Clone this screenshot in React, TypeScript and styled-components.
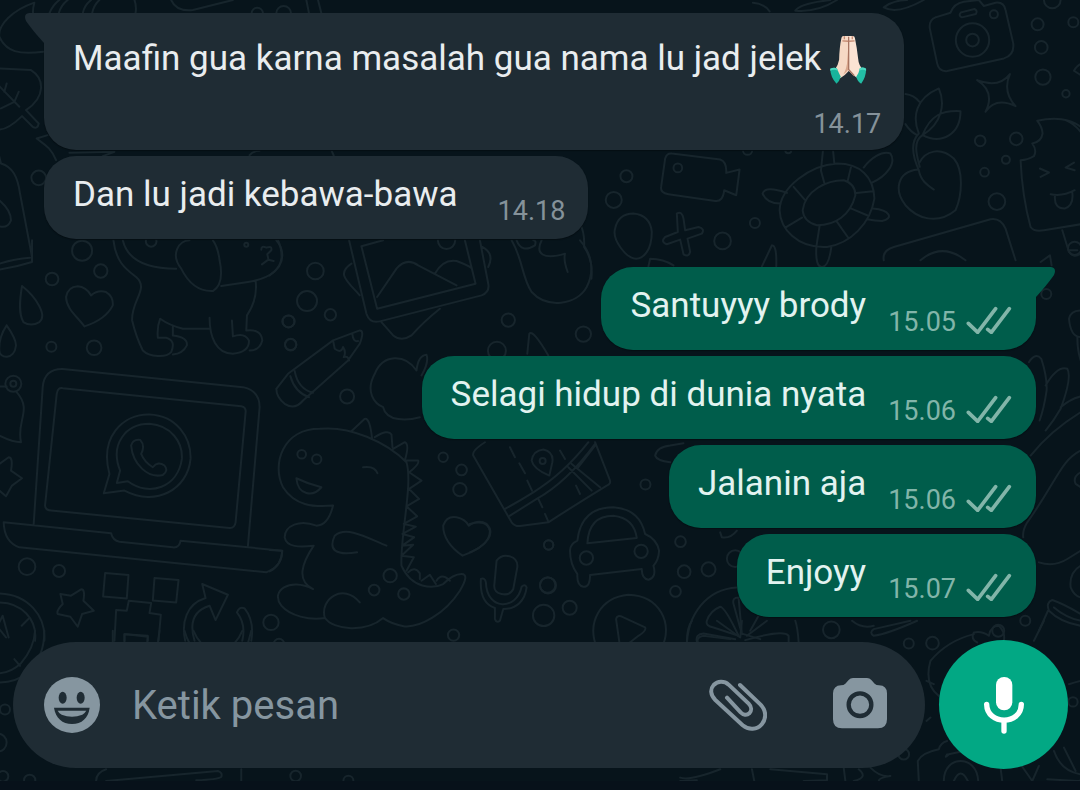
import React from "react";
import styled, { createGlobalStyle } from "styled-components";

const GlobalStyle = createGlobalStyle`
  *, *::before, *::after { box-sizing: border-box; }
  body { margin: 0; background: #07141b; font-family: Roboto, "Noto Sans", sans-serif; }
`;

const Screen = styled.div`
  position: relative;
  min-height: 100vh;
  display: flex;
  flex-direction: column;
  overflow: hidden;
  background: #07141b;
`;

const Pattern = styled.svg`
  position: absolute;
  inset: 0;
  width: 100%;
  height: 100%;
  fill: none;
  stroke: #17252c;
  stroke-width: 6;
  stroke-linecap: round;
  stroke-linejoin: round;
`;

const Messages = styled.main`
  position: relative;
  flex: 1;
  display: flex;
  flex-direction: column;
  gap: 28px;
  padding: 13px 44px 0;
`;

const Group = styled.section<{ $out?: boolean }>`
  display: flex;
  flex-direction: column;
  align-items: ${(p) => (p.$out ? "flex-end" : "flex-start")};
  gap: 6px;
`;

const Bubble = styled.article<{ $out?: boolean; $tail?: boolean; $tall?: boolean }>`
  position: relative;
  display: flex;
  flex-direction: ${(p) => (p.$tall ? "column" : "row")};
  align-items: flex-end;
  gap: ${(p) => (p.$tall ? "10px" : p.$out ? "22px" : "40px")};
  padding: 17px ${(p) => (p.$out ? "24px" : "23px")} ${(p) => (p.$tall ? "10px" : "12px")} 29px;
  border-radius: 32px;
  ${(p) => p.$tail && (p.$out ? "border-top-right-radius: 0;" : "border-top-left-radius: 0;")}
  background: ${(p) => (p.$out ? "#005d4b" : "#1f2c34")};
  color: ${(p) => (p.$out ? "#e2f3f0" : "#e9edef")};
  box-shadow: 0 1px 1px #050e13;
`;

const Tail = styled.svg<{ $out?: boolean }>`
  position: absolute;
  top: 0;
  ${(p) => (p.$out ? "left: 100%;" : "right: 100%;")}
  width: 20px;
  height: 30px;
  fill: ${(p) => (p.$out ? "#005d4b" : "#1f2c34")};
  transform: ${(p) => (p.$out ? "scaleX(-1)" : "none")};
`;

const Text = styled.p<{ $tall?: boolean }>`
  display: flex;
  align-items: center;
  gap: 8px;
  margin: 0 ${(p) => (p.$tall ? "14px" : "0")} 10px 0;
  font-size: 35px;
  line-height: ${(p) => (p.$tall ? "58px" : "44px")};
`;

const Meta = styled.footer<{ $out?: boolean }>`
  display: flex;
  align-items: center;
  gap: 10px;
  font-size: 27px;
  line-height: 32px;
  color: ${(p) => (p.$out ? "#82b5a9" : "#85929a")};
`;

const TickIcon = styled.svg`
  width: 46px;
  height: 32px;
  padding-bottom: 4px;
  fill: none;
  stroke: currentColor;
  stroke-width: 11;
  stroke-linecap: round;
  stroke-linejoin: miter;
`;

const HandsIcon = styled.svg`
  width: 38px;
  height: 50px;
`;

const Composer = styled.form`
  position: relative;
  display: flex;
  align-items: center;
  gap: 14px;
  padding: 23px 12px 12px 13px;
`;

const Field = styled.div`
  flex: 1;
  min-width: 0;
  height: 126px;
  display: flex;
  align-items: center;
  padding: 0 36px 0 30px;
  border-radius: 63px;
  background: #1f2c34;
`;

const MessageInput = styled.input`
  flex: 1;
  min-width: 0;
  margin: 0 20px 0 31px;
  padding: 2px 0 0;
  border: 0;
  outline: 0;
  background: transparent;
  color: #e9edef;
  font: 40px/48px Roboto, "Noto Sans", sans-serif;
  &::placeholder { color: #8696a0; opacity: 1; }
`;

const IconButton = styled.button`
  flex: none;
  display: flex;
  padding: 0;
  border: 0;
  background: none;
  color: #8696a0;
  & + & { margin-left: 64px; }
`;

const Icon = styled.svg`
  width: 58px;
  height: 58px;
`;

const MicButton = styled.button`
  flex: none;
  display: flex;
  align-items: center;
  justify-content: center;
  width: 129px;
  height: 129px;
  padding: 0;
  border: 0;
  border-radius: 50%;
  background: #02a884;
`;

const BottomEdge = styled.div`
  position: relative;
  height: 10px;
  background: #07111a;
`;

type Dot = [number, number, number];

function Doodle({ x, y, d, dots = [] }: { x: number; y: number; d: string; dots?: Dot[] }) {
  return (
    <g transform={`translate(${x} ${y}) scale(0.3333)`}>
      <path d={d} />
      {dots.map(([cx, cy, r]) => (
        <circle key={`${cx}-${cy}-${r}`} cx={cx} cy={cy} r={r} />
      ))}
    </g>
  );
}

function Wallpaper() {
  return (
    <Pattern viewBox="0 0 1080 790" preserveAspectRatio="xMidYMin slice" aria-hidden="true">
      {/* leaves and bag, upper left */}
      <Doodle
        x={0}
        y={0}
        d="M105 8C40 30-5 75 0 110C20 155 60 165 132 155M105 8Q96 40 106 60M150 40Q160 15 180 0M178 40Q185 15 205 0M250 40Q255 15 275 0M278 40Q283 15 300 0M405 0Q412 20 408 40M515 0Q530 35 580 30L700 0M920 0L928 40M955 0L965 40M0 205L95 210C135 235 140 290 80 330L118 370Q115 388 100 380L68 348C40 375 20 388 0 388M0 258L60 320M22 250L15 275M58 275L45 305L5 325M145 405L112 415C130 430 155 440 170 480M0 470L5 490C40 500 55 530 62 580L98 770M0 600Q35 630 35 660Q25 685 0 678M210 458L345 455L310 468M750 465Q760 452 780 452M995 450L1002 466"
        dots={[[773, 40, 17], [852, 40, 22], [118, 533, 22]]}
      />
      {/* camera, sprout, star and ice cream, upper right */}
      <Doodle
        x={720}
        y={0}
        d="M98 8Q130 10 148 34M225 32Q240 10 330 0M225 32Q290 38 350 0M490 22Q520 0 560 0M490 22Q530 45 610 0M645 52L690 38Q700 10 730 5L775 0L790 18L825 8Q850 5 855 30L878 130Q882 165 850 175L680 213Q655 215 650 190L628 85Q625 60 645 52M722 37L762 27Q772 32 766 42L724 52Q712 46 722 37M770 240Q835 265 868 222Q845 275 885 318Q825 290 795 335Q825 275 770 240M595 400C575 350 585 295 655 265C675 310 665 370 606 405M606 405C630 345 665 330 720 333C720 400 665 435 606 405C575 425 590 470 598 500M595 400C570 425 575 465 595 510C600 540 620 555 640 568M595 490C615 450 660 440 700 475C730 510 725 585 705 630C650 675 590 655 555 615C520 570 530 515 592 508M555 282Q580 285 597 305M555 372Q570 395 590 405M950 362C1000 350 1050 355 1080 380M950 362Q965 380 966 400Q962 425 935 430Q950 450 940 468Q920 480 900 480Q905 590 930 680Q940 695 970 690L1080 672M1035 360Q1060 370 1080 395M958 505L985 517L960 530M1060 487L1035 502L1062 510M990 582Q1025 590 1062 570M1003 587Q1000 625 1032 625Q1060 615 1055 577M1025 690L1045 755Q1060 775 1080 760M1060 212Q1070 195 1080 192M1060 212L1080 225M490 780Q485 750 520 740L810 657Q840 652 855 685L885 780M600 780Q665 725 735 780"
        dots={[[756, 120, 50], [756, 120, 19], [820, 43, 12], [995, 0, 25], [951, 73, 18], [1058, 67, 15], [962, 142, 19], [967, 231, 23], [1036, 281, 11], [779, 422, 16], [887, 416, 19], [856, 479, 12], [792, 516, 13], [829, 604, 25]]}
      />
      {/* puppy, laptop, star and arrow, left */}
      <Doodle
        x={0}
        y={240}
        d="M98 0L98 65Q50 80 0 88M0 70Q45 55 92 52M68 137C110 170 145 225 120 245Q95 260 72 245C58 220 60 185 68 137M22 255Q50 295 50 315C45 360 0 355 0 330Q-2 290 22 255M255 258C235 230 200 205 200 170Q205 140 235 138Q260 140 275 165Q295 148 320 155Q342 168 340 195C325 225 295 245 255 258M342 0C350 70 385 90 410 110C450 145 395 180 398 240Q410 290 430 330C450 350 500 352 515 335Q530 300 500 292L475 292Q472 260 482 235Q510 255 550 265L632 265M370 0Q390 85 530 85M545 85C510 40 540 0 570 0M545 85Q580 155 640 152Q675 130 660 60Q655 20 640 0M665 137L745 125Q840 110 846 50Q845 20 835 0M768 122Q775 175 742 225L740 270Q785 265 788 300Q780 330 750 330M520 255L520 285Q565 290 562 315Q550 340 520 342M630 232C630 290 650 340 700 340Q750 335 748 300Q735 275 700 288L697 240M785 28Q785 15 800 22Q818 15 815 30L803 42L806 55M787 72L806 58L822 62M103 850L130 440Q135 385 190 386L730 440Q780 450 780 500L745 915M172 460Q175 440 190 443L725 497Q740 500 738 515L708 845Q705 863 690 862L155 810Q137 808 137 795ZM13 845L335 878Q340 900 360 903L520 920Q540 922 543 900L847 930Q850 975 800 995L60 920Q15 905 13 845M313 758L330 700C300 590 370 520 450 522C530 525 575 590 573 655C565 745 470 800 375 750ZM352 727L362 690C330 610 380 550 450 550C515 555 550 605 547 655C535 740 450 770 385 722ZM395 615Q400 595 422 598Q438 615 425 640Q435 665 460 680Q475 660 495 675Q508 690 490 703C445 715 400 670 395 615M0 438L22 438M52 455C100 510 50 540 65 605Q40 605 0 585M0 670L28 650Q42 650 35 690L68 713L38 735L20 767L0 750M183 1060L215 1065L245 1046Q258 1045 252 1080L283 1110L248 1120L235 1158L213 1128L175 1120Q170 1110 190 1090ZM317 997L387 1003L382 1073L311 1067ZM465 1012L537 1018L530 1085L460 1079ZM345 1200L350 1108L382 1110L388 1080L455 1087L450 1117L484 1122L477 1200M375 1200V1180L445 1188V1200M608 1030L685 1062L648 1138L630 1095C580 1110 570 1150 585 1200M608 1030L618 1072C560 1090 545 1145 557 1200M712 1115Q720 1095 735 1103Q765 1140 755 1200M712 1115Q740 1150 728 1200M0 1058C85 1060 140 1125 135 1200M0 1085C65 1085 115 1135 107 1200M67 1155L87 1135M0 1145L10 1125L28 1190M0 1165L20 1190"
        dots={[[455, 3, 16], [740, 13, 6], [248, 31, 30], [304, 92, 20], [158, 116, 19], [156, 319, 15], [284, 322, 22], [866, 243, 18], [873, 313, 17], [42, 430, 24], [42, 430, 9], [83, 978, 25], [179, 991, 18], [814, 1145, 23]]}
      />
      {/* picture frame, pencil, apple, dinosaur and map, centre */}
      <Doodle
        x={270}
        y={240}
        d="M0 105Q38 80 38 45Q38 20 20 0M238 0L290 220Q300 250 330 243L635 165Q660 155 655 130L630 0M275 18L322 205L617 130L585 0M275 18L340 0M322 170L380 85Q410 50 445 75L560 135M495 100Q520 55 560 62Q595 75 603 82M245 70C200 100 230 120 270 165M637 20Q675 40 655 80M335 245L370 285Q395 305 425 285Q460 245 510 205M725 0C760 60 755 110 785 155C830 205 920 195 950 140C975 90 965 40 930 0M740 0Q755 40 795 15Q800 0 790 0M815 0C795 40 820 60 885 40Q880 60 893 95M20 445L55 400L190 300L270 270Q285 270 270 310L235 360L100 480Q75 510 45 490Q20 470 20 445M75 392Q85 445 130 457M62 407Q75 455 118 470M190 300L195 325Q215 340 220 320Q230 335 222 350Q235 345 238 360M248 282Q250 305 265 302M440 390C405 340 340 340 315 400C285 455 315 490 340 500C350 545 415 540 450 530M440 390Q445 345 470 343Q478 365 455 405M772 340L778 280Q788 265 835 345M190 795C130 800 75 795 40 740C5 670 40 565 150 565C240 555 350 605 410 665C430 730 390 890 395 975C425 1045 490 1045 520 1030Q550 1000 575 1000Q600 1000 570 1050C525 1120 450 1160 405 1157Q365 1150 340 1132C290 1175 190 1170 165 1130C150 1075 220 1025 270 1085M190 795Q175 855 140 855C90 835 45 855 45 890C50 920 90 920 132 915C95 970 80 1020 130 1045C60 1010 0 1050 35 1095C60 1125 120 1140 165 1132M350 915C290 890 230 855 195 885Q165 950 262 935M280 680Q315 675 323 698M80 713Q115 730 155 740C130 770 85 765 80 713M245 572L285 535Q300 530 307 595M315 590Q355 565 365 582L368 620M370 625L405 605Q420 610 405 660M410 660L445 660Q450 670 418 695M418 695L455 720L418 745L448 775L410 797L442 827L402 850L438 858L398 880L433 890L397 915L430 912L395 945L432 950L410 990M415 995Q435 975 450 998V1015M455 1020L480 1002L498 1030M500 1020Q515 995 540 1020M578 945C535 915 520 885 520 855Q530 825 560 830Q585 835 597 855Q625 835 650 850Q670 870 655 895Q635 925 578 945M0 928L38 930Q35 975 0 992M680 960Q695 940 720 947Q745 955 742 980L730 1045Q720 1065 695 1060Q672 1055 673 1035ZM633 1015Q645 1010 648 1025C650 1110 740 1110 755 1038Q765 1028 770 1040C765 1080 740 1105 700 1105L690 1140Q680 1148 675 1135V1102C640 1090 630 1060 633 1015"
        dots={[[530, 0, 26], [137, 92, 25], [112, 182, 30], [57, 243, 18], [182, 223, 17], [63, 312, 17], [232, 468, 21], [715, 239, 20], [940, 281, 23], [681, 331, 27], [96, 641, 13], [141, 656, 14], [361, 1005, 20], [313, 1048, 16], [402, 1060, 17], [520, 650, 14], [575, 688, 16], [570, 747, 20], [836, 913, 14], [833, 1033, 23], [821, 1124, 32], [899, 1101, 21], [551, 1183, 17]]}
      />
      {/* video camera, egg, cross and turtle */}
      <Doodle
        x={580}
        y={150}
        d="M275 10L420 28Q440 35 438 68L478 58L468 135L432 120Q428 155 405 152L265 132Q240 128 243 110L255 25Q260 8 275 10M105 235Q115 190 160 190Q210 195 215 245C215 300 190 325 168 325C140 325 95 270 105 235M290 190Q305 180 310 205L315 240L355 230Q375 235 365 250L322 265L330 305Q325 322 310 312L300 268L260 282Q240 275 255 260L293 245ZM598 180C600 110 690 45 770 40C840 40 880 80 882 145C870 220 810 280 740 290C650 295 600 235 598 180M667 180C675 120 740 90 790 90Q825 100 825 135C810 195 765 225 710 225Q670 215 667 180M640 110L673 148M722 62L733 102M812 50L802 92M828 128L878 123M813 175L860 195M770 215L802 260M718 225L708 290M665 202L615 232M620 128Q555 105 547 130Q560 160 600 160M722 60L728 0M762 40L758 0M850 52C870 25 905 0 930 10C950 40 915 80 875 97M878 175C930 180 940 205 905 212Q885 212 860 207M708 292Q705 350 725 350Q745 350 753 290M545 348L575 285Q590 285 588 348M205 348L210 325Q250 325 280 345M0 220Q15 250 12 290Q40 330 34 385"
        dots={[[293, 53, 13], [139, 78, 18], [101, 149, 24], [524, 218, 15], [427, 272, 25], [502, 0, 14], [624, 0, 9]]}
      />
      {/* plants along the right edge */}
      <Doodle
        x={860}
        y={250}
        d="M540 35L568 15L573 45M650 0Q635 0 625 0M660 180Q630 180 625 205Q630 260 660 260M650 260Q650 300 660 330M505 335Q525 305 542 325Q560 380 558 420Q550 475 537 510M555 405Q590 345 620 355Q635 380 600 475Q580 510 555 540M600 470Q630 445 660 438M510 615Q570 540 660 485M660 600C600 630 590 690 500 815Q485 840 488 860M660 665Q635 680 645 700L660 710M535 935Q580 950 620 925L660 900M660 945Q625 965 630 1010Q640 1035 660 1040M660 1090Q610 1060 575 1048Q555 1055 565 1080Q600 1115 660 1125M660 1110Q615 1100 580 1070M562 1080L535 1140"
        dots={[[557, 131, 15], [642, -6, 20], [494, 1110, 15], [413, 1140, 18]]}
      />
      {/* folded map, car, play button and citrus slice */}
      <Doodle
        x={470}
        y={430}
        d="M45 35Q5 60 10 75L125 275Q135 288 150 286L235 275Q320 220 410 165Q425 160 418 145L375 35M105 235Q150 210 190 185Q280 130 355 35M120 255L200 205Q290 155 375 40M295 110L365 180M305 100L390 170M325 110L375 45M120 50L135 80M148 98L165 128M172 150L186 180M270 60L285 85M205 205L217 230M225 250L235 273M318 165L330 190M185 90Q190 60 220 57Q252 65 247 95L238 135Q190 115 185 90M600 95Q560 90 555 75Q560 50 600 45L640 38M300 360Q300 340 322 330C330 260 370 230 430 230C490 235 515 265 525 310Q560 325 567 360Q565 390 550 405Q560 440 535 447Q515 445 515 415L360 433Q360 470 340 468Q320 465 322 430Q300 400 300 360M352 338C355 275 390 255 430 255C475 260 495 285 500 322ZM0 280Q50 265 60 300Q60 340 0 365M380 650C350 575 390 500 475 492C570 495 610 580 575 650M450 650L438 565Q440 550 460 560L525 590Q530 600 505 615L460 650M650 650C650 550 710 475 800 470M710 570Q720 540 750 528Q765 530 805 615L730 590Q705 585 710 570M790 520Q785 500 805 500L815 610L790 520M840 600L865 555M690 650Q670 620 700 615L780 625M820 610L870 625M750 305L755 320Q780 325 800 300"
        dots={[[218, 91, 9], [526, 162, 15], [236, 343, 14], [234, 464, 24], [349, 382, 20], [513, 362, 20], [631, 333, 16], [642, 423, 19], [715, 416, 21], [795, 384, 25], [616, 482, 16]]}
      />
      {/* lower edge shapes */}
      <Doodle
        x={0}
        y={630}
        d="M135 0Q135 80 85 125Q50 155 0 155M107 0Q105 50 65 97Q35 125 0 127M45 85L62 105M340 37V0M375 37V10L445 15L443 37M480 0L475 37M555 0Q560 20 570 37M582 0Q590 20 605 37M728 0Q720 20 705 37M755 0Q750 20 745 37M290 450Q290 425 320 415M320 450L655 420Q670 425 665 438Q655 445 590 448M725 415V450"
        dots={[[17, 236, 15], [-5, 335, 27], [11, 436, 16], [91, 448, 17], [838, 40, 16], [888, 435, 16], [1046, 449, 15]]}
      />
      <Doodle
        x={680}
        y={620}
        d="M20 65Q20 20 35 0M355 65Q352 20 345 0M50 62Q45 40 70 38L165 55M110 0L180 50L185 0M200 45L260 0M195 58Q310 25 325 45V65M515 0Q545 25 580 15M690 0L580 25Q565 35 580 45Q620 40 710 0M890 65Q870 55 880 35Q905 30 925 45Q930 15 955 15Q975 35 970 60M880 40Q800 60 750 120Q730 190 775 225M738 180L760 190M738 300L750 290M1060 60L1090 0M1165 190Q1180 185 1200 180M715 480L712 420Q725 395 775 385Q780 365 800 360M800 400Q790 415 805 400L850 390M790 480C790 400 890 400 893 480M820 480Q840 435 862 480M960 440L965 480M1020 430L1055 480L1075 435M1120 390Q1140 450 1200 460Q1210 480 1190 480L1100 475M1150 380L1185 450M490 440L495 480M520 480Q565 470 535 445M570 440Q600 470 630 465Q595 470 595 480M215 445L222 480M0 470Q30 480 120 445M0 480L50 478M270 445L440 460V478L370 480"
        dots={[[453, 27, 25], [685, 68, 15], [756, 67, 19], [1177, 243, 14], [670, 400, 16]]}
      />
    </Pattern>
  );
}

function PrayingHands() {
  return (
    <HandsIcon viewBox="32 22 112 152" role="img" aria-label="🙏🏻">
      <path d="M68 34Q69 27 76 28L91 28V134Q79 149 63 157Q51 147 47 132Q58 118 61 100Q62 62 68 34Z" fill="#f6d9c5" />
      <path d="M109 34Q108 27 101 28L90 28V134Q101 148 119 157Q130 147 134 132Q120 116 119 98Q115 62 109 34Z" fill="#fbe3d3" />
      <path d="M90 44V129Q83 138 74 145Q85 125 86 100Z" fill="#d9a78d" />
      <path d="M90 30V130L107 149" fill="none" stroke="#a87562" strokeWidth="4" />
      <path d="M71 43L89 44M91 44L108 43M77 29V38M101 29V38" fill="none" stroke="#c48a72" strokeWidth="4" />
      <path d="M34 128Q44 122 54 126Q60 140 66 152Q62 166 53 173Q35 155 34 128Z" fill="#18b49c" />
      <path d="M143 128Q133 121 124 126Q121 142 113 152Q117 167 128 173Q143 154 143 128Z" fill="#23bda5" />
      <path d="M34 128Q44 122 54 126L57 134Q46 128 34 134ZM143 128Q133 121 124 126L122 134Q133 128 143 134Z" fill="#4fd8c0" />
    </HandsIcon>
  );
}

function Ticks() {
  return (
    <TickIcon viewBox="318 167 138 84" role="img" aria-label="Terkirim">
      <path d="M325 219L353 246L407 175M383 237L394 246L448 175" />
    </TickIcon>
  );
}

interface MessageProps {
  time: string;
  out?: boolean;
  tail?: boolean;
  tall?: boolean;
  children: React.ReactNode;
}

function Message({ time, out, tail, tall, children }: MessageProps) {
  return (
    <Bubble $out={out} $tail={tail} $tall={tall}>
      {tail && (
        <Tail $out={out} viewBox="0 0 20 30" aria-hidden="true">
          <path d="M20 0H5Q-1 1 2 8Q9 18 20 30Z" />
        </Tail>
      )}
      <Text $tall={tall}>{children}</Text>
      <Meta $out={out}>
        <time>{time}</time>
        {out && <Ticks />}
      </Meta>
    </Bubble>
  );
}

export default function App() {
  return (
    <Screen>
      <GlobalStyle />
      <Wallpaper />
      <Messages>
        <Group>
          <Message time="14.17" tail tall>
            Maafin gua karna masalah gua nama lu jad jelek
            <PrayingHands />
          </Message>
          <Message time="14.18">Dan lu jadi kebawa-bawa</Message>
        </Group>
        <Group $out>
          <Message time="15.05" out tail>Santuyyy brody</Message>
          <Message time="15.06" out>Selagi hidup di dunia nyata</Message>
          <Message time="15.06" out>Jalanin aja</Message>
          <Message time="15.07" out>Enjoyy</Message>
        </Group>
      </Messages>
      <Composer onSubmit={(e) => e.preventDefault()}>
        <Field>
          <IconButton type="button" aria-label="Emoji">
            <Icon viewBox="130 138 174 174">
              <circle cx="217" cy="225" r="84" fill="currentColor" />
              <ellipse cx="189" cy="203" rx="12" ry="18" fill="#1f2c34" />
              <ellipse cx="243" cy="203" rx="12" ry="18" fill="#1f2c34" />
              <path d="M163 233H270C266 264 246 282 217 282S168 264 163 233Z" fill="#1f2c34" />
              <path d="M174 242H260Q255 250 248 254Q217 266 186 254Q178 250 174 242Z" fill="currentColor" />
            </Icon>
          </IconButton>
          <MessageInput type="text" placeholder="Ketik pesan" aria-label="Ketik pesan" />
          <IconButton type="button" aria-label="Lampirkan">
            <Icon viewBox="89 166 174 174">
              <path
                d="M182 193L243 251C263 271 260 295 248 310C233 328 208 329 190 314L108 238C93 223 92 205 103 193C115 181 134 180 148 192L208 249C218 259 217 271 210 278C202 285 192 283 184 275L143 231"
                fill="none"
                stroke="currentColor"
                strokeWidth="12"
                strokeLinecap="round"
                strokeLinejoin="round"
              />
            </Icon>
          </IconButton>
          <IconButton type="button" aria-label="Kamera">
            <Icon viewBox="452 166 174 174">
              <path
                d="M518 172H560Q568 172 573 178L583 189Q588 194 596 194Q620 195 620 218V296Q620 323 593 323H485Q458 323 458 296V218Q459 195 482 194Q490 194 495 189L505 178Q510 172 518 172Z"
                fill="currentColor"
              />
              <circle cx="539" cy="252" r="34" fill="none" stroke="#1f2c34" strokeWidth="13" />
            </Icon>
          </IconButton>
        </Field>
        <MicButton type="button" aria-label="Rekam pesan suara">
          <Icon viewBox="885 167 174 174" fill="none" stroke="#fff">
            <rect x="948" y="170" width="49" height="100" rx="24" fill="#fff" stroke="none" />
            <path d="M920 252C921 315 1024 315 1024 252" strokeWidth="16" strokeLinecap="round" />
            <path d="M972 304V332" strokeWidth="16" strokeLinecap="round" />
          </Icon>
        </MicButton>
      </Composer>
      <BottomEdge />
    </Screen>
  );
}
